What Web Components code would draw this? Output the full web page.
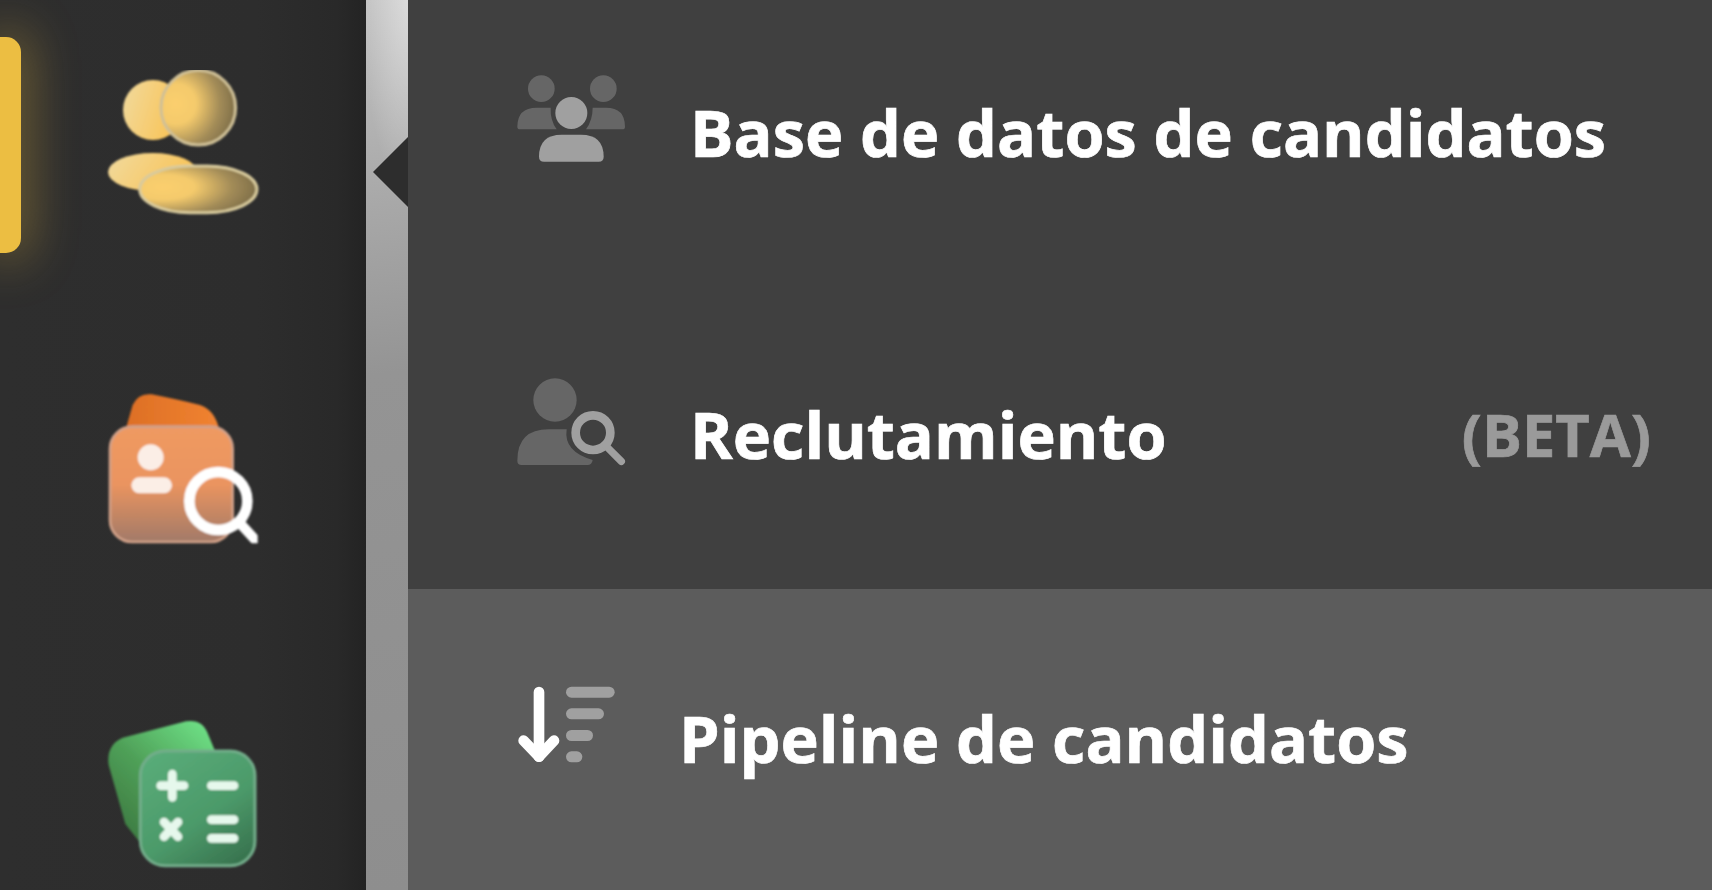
<!DOCTYPE html>
<html lang="es">
<head>
<meta charset="utf-8">
<title>Menu</title>
<style>
  html, body { margin: 0; height: 100%; overflow: hidden; background: #404040; }
  body { font-family: "Open Sans", "Liberation Sans", sans-serif; }
</style>
</head>
<body>
<app-shell>
  <side-nav slot="nav">
    <svg slot="one" width="200" height="190" viewBox="0 0 600 570">
      <defs>
        <filter id="soft1" x="-5%" y="-5%" width="110%" height="110%"><feGaussianBlur stdDeviation="3.2"/></filter>
        <linearGradient id="ybackA" x1="0" x2="1" y1="0" y2="0.3"><stop offset="0" stop-color="#f1da9e"/><stop offset="1" stop-color="#f9c458"/></linearGradient>
        <radialGradient id="yfront" cx="0.2" cy="0.45" r="0.9"><stop offset="0" stop-color="#fbcf6e"/><stop offset=".3" stop-color="#f4ca6c"/><stop offset=".65" stop-color="#a38c58"/><stop offset="1" stop-color="#6f6242"/></radialGradient>
        <clipPath id="clipOne"><rect x="0" y="60" width="600" height="510"/></clipPath>
      </defs>
      <g filter="url(#soft1)" clip-path="url(#clipOne)">
        <circle cx="219" cy="180" r="90" fill="url(#ybackA)"/>
        <ellipse cx="218" cy="366" rx="134" ry="57" fill="url(#ybackA)"/>
        <circle cx="355" cy="173" r="112" fill="url(#yfront)" stroke="#cfc096" stroke-width="9"/>
        <rect x="179" y="348" width="352" height="140" rx="150" ry="70" fill="url(#yfront)" stroke="#d8ca9c" stroke-width="9"/>
      </g>
    </svg>
    <svg slot="two" width="200" height="190" viewBox="0 0 600 570">
      <defs>
        <filter id="soft2" x="-5%" y="-5%" width="110%" height="110%"><feGaussianBlur stdDeviation="3.2"/></filter>
        <linearGradient id="oback" x1="0" x2="1" y1="0" y2="0"><stop offset="0" stop-color="#dd6f25"/><stop offset="1" stop-color="#f08331"/></linearGradient>
        <linearGradient id="ofront" x1="0" x2="0" y1="0" y2="1"><stop offset="0" stop-color="#ef9a62"/><stop offset=".5" stop-color="#ea9460"/><stop offset="1" stop-color="#a27a68"/></linearGradient>
        <clipPath id="clipTwo"><rect x="0" y="0" width="533" height="520"/></clipPath>
      </defs>
      <g filter="url(#soft2)">
        <path d="M138 175 L158 105 Q175 68 215 73 Q300 90 360 105 Q405 120 418 180 Z" fill="url(#oback)"/>
        <rect x="90" y="170" width="368" height="346" rx="66" fill="url(#ofront)" stroke="#d0a088" stroke-width="8"/>
        <circle cx="212" cy="262" r="39" fill="#fbeee6"/>
        <rect x="154" y="322" width="122" height="48" rx="24" fill="#fbeee6"/>
        <g clip-path="url(#clipTwo)">
          <circle cx="415" cy="393" r="87" fill="none" stroke="#fff" stroke-width="32"/>
          <path d="M482 462 L528 512" stroke="#fff" stroke-width="30" stroke-linecap="round"/>
        </g>
      </g>
    </svg>
    <svg slot="three" width="200" height="190" viewBox="0 0 600 570">
      <defs>
        <filter id="soft3" x="-5%" y="-5%" width="110%" height="110%"><feGaussianBlur stdDeviation="3.2"/></filter>
        <linearGradient id="gback" x1="1" x2="0.2" y1="0" y2="1"><stop offset="0" stop-color="#72e98c"/><stop offset=".55" stop-color="#4fa058"/><stop offset="1" stop-color="#3c7840"/></linearGradient>
        <linearGradient id="gfront" x1="0.2" x2="0.9" y1="0" y2="1"><stop offset="0" stop-color="#58ab78"/><stop offset=".55" stop-color="#4c9a6a"/><stop offset="1" stop-color="#36704c"/></linearGradient>
      </defs>
      <g filter="url(#soft3)">
        <path d="M128 113 L318 64 Q366 56 383 100 L408 160 L190 440 L136 372 L86 195 Q78 135 128 113 Z" fill="url(#gback)"/>
        <rect x="181" y="153" width="344" height="344" rx="74" fill="url(#gfront)" stroke="#72ad8a" stroke-width="9"/>
        <g stroke="#e6f8ec" stroke-width="26" stroke-linecap="round" fill="none">
          <path d="M242 257 H312 M277 222 V292"/>
          <path d="M394 257 H462"/>
          <path d="M252 366 L294 410 M294 366 L252 410"/>
          <path d="M394 359 H462 M394 415 H462"/>
        </g>
      </g>
    </svg>
  </side-nav>
  <notch-strip slot="strip"></notch-strip>
  <menu-list slot="menu">
    <menu-row style="--h:287px;--top:60px;--gap:30px;--shift:12px">
      <svg slot="icon" width="160" height="120" viewBox="0 0 480 360">
        <g fill="#666">
          <circle cx="124" cy="86" r="40"/>
          <circle cx="310" cy="86" r="40"/>
          <path d="M52 200 Q52 143 110 143 H152 Q150 180 170 208 H60 Q52 208 52 200 Z"/>
          <path d="M375 200 Q375 143 318 143 H278 Q278 180 258 208 H367 Q375 208 375 200 Z"/>
        </g>
        <g fill="#a0a0a0">
          <circle cx="214" cy="159" r="48"/>
          <path d="M117 290 Q117 224 185 224 H243 Q311 224 311 290 Q311 305 296 305 H132 Q117 305 117 290 Z"/>
        </g>
      </svg>
      Base de datos de candidatos
    </menu-row>
    <menu-row style="--h:302px;--top:73px;--gap:30px;--shift:14px">
      <svg slot="icon" width="160" height="120" viewBox="0 0 480 360">
        <g fill="#666">
          <circle cx="165" cy="120" r="65"/>
          <path d="M52 302 Q52 208 146 208 H200 Q190 275 278 300 Q276 315 262 315 H65 Q52 315 52 302 Z"/>
        </g>
        <g fill="none" stroke="#a0a0a0" stroke-linecap="round">
          <circle cx="279" cy="218" r="52" stroke-width="26"/>
          <path d="M318 258 L364 304" stroke-width="22"/>
        </g>
      </svg>
      Reclutamiento
      <span slot="tag">(BETA)</span>
    </menu-row>
    <menu-row active style="--h:301px;--top:81px;--gap:19px;--shift:8px">
      <svg slot="icon" width="160" height="120" viewBox="0 0 480 360">
        <g fill="none" stroke="#fff" stroke-linecap="round" stroke-linejoin="round" stroke-width="32">
          <path d="M117 66 V260"/>
          <path d="M71 212 L117 260 L162 212"/>
        </g>
        <g fill="#a0a0a0">
          <rect x="198" y="50" width="146" height="33" rx="16.5"/>
          <rect x="198" y="115" width="114" height="33" rx="16.5"/>
          <rect x="198" y="180" width="81" height="33" rx="16.5"/>
          <rect x="198" y="244" width="49" height="33" rx="16.5"/>
        </g>
      </svg>
      Pipeline de candidatos
    </menu-row>
  </menu-list>
</app-shell>

<script>
class AppShell extends HTMLElement {
  constructor() {
    super();
    this.attachShadow({mode: "open"}).innerHTML = `
    <style>
      :host { display: grid; grid-template-columns: 366px 42px 1fr; height: 890px; }
    </style>
    <slot name="nav"></slot>
    <slot name="strip"></slot>
    <slot name="menu"></slot>`;
  }
}

class SideNav extends HTMLElement {
  constructor() {
    super();
    this.attachShadow({mode: "open"}).innerHTML = `
    <style>
      :host {
        display: flex;
        flex-direction: column;
        position: relative;
        box-sizing: border-box;
        height: 890px;
        padding: 50px 0 0 80px;
        overflow: hidden;
        background: linear-gradient(90deg, #2e2e2e 0%, #2d2d2d 70%, #292929 92%, #232323 100%);
      }
      .pill {
        position: absolute;
        left: 0;
        top: 37px;
        width: 21px;
        height: 216px;
        background: #ecbe42;
        border-radius: 0 15px 15px 0;
        box-shadow: 0 0 48px 8px rgba(236, 190, 66, .38);
      }
      .item { display: block; height: 190px; }
      .item + .item { margin-top: 130px; }
      .item:last-child { margin-top: 140px; }
    </style>
    <div class="pill"></div>
    <div class="item"><slot name="one"></slot></div>
    <div class="item"><slot name="two"></slot></div>
    <div class="item"><slot name="three"></slot></div>`;
  }
}

class NotchStrip extends HTMLElement {
  constructor() {
    super();
    this.attachShadow({mode: "open"}).innerHTML = `
    <style>
      :host {
        display: block;
        position: relative;
        height: 890px;
        background:
          radial-gradient(ellipse 46px 190px at 100% 0, rgba(255, 255, 255, .42), rgba(255, 255, 255, 0)),
          linear-gradient(173deg, #c2c2c2 0, #a8a8a8 23%, #949494 42%, #8e8e8e 100%);
      }
      .notch {
        position: absolute;
        right: 0;
        top: 137px;
        width: 35px;
        height: 70px;
        background: #2d2d2d;
        clip-path: polygon(0 50%, 100% 0, 100% 100%);
      }
    </style>
    <div class="notch"></div>`;
  }
}

class MenuList extends HTMLElement {
  constructor() {
    super();
    this.attachShadow({mode: "open"}).innerHTML = `
    <style>
      :host { display: flex; flex-direction: column; height: 890px; background: #404040; }
    </style>
    <slot></slot>`;
  }
}

class MenuRow extends HTMLElement {
  constructor() {
    super();
    this.attachShadow({mode: "open"}).innerHTML = `
    <style>
      :host {
        display: flex;
        box-sizing: border-box;
        height: var(--h);
        padding: var(--top) 61px 0 92px;
        color: #fff;
        font: 700 64.8px/120px "Open Sans", "Liberation Sans", sans-serif;
        -webkit-text-stroke: .7px #fff;
      }
      :host([active]) { background: #5c5c5c; }
      .icon { display: block; width: 160px; height: 120px; flex: none; }
      .label { margin-left: var(--gap); padding-top: var(--shift); white-space: nowrap; }
      .tag {
        margin-left: auto;
        padding-top: var(--shift);
        color: #9a9a9a;
        -webkit-text-stroke: .7px #9a9a9a;
        font-size: 59.5px;
      }
    </style>
    <div class="icon"><slot name="icon"></slot></div>
    <div class="label"><slot></slot></div>
    <div class="tag"><slot name="tag"></slot></div>`;
  }
}

customElements.define("app-shell", AppShell);
customElements.define("side-nav", SideNav);
customElements.define("notch-strip", NotchStrip);
customElements.define("menu-list", MenuList);
customElements.define("menu-row", MenuRow);
</script>
</body>
</html>
